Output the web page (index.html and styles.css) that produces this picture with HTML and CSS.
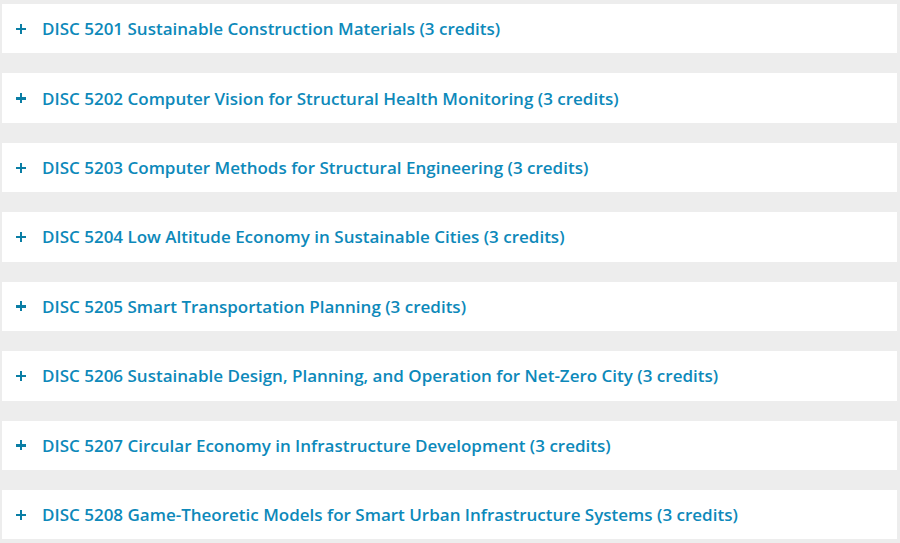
FILE: index.html
```html
<!DOCTYPE html>
<html lang="en">
<head>
<meta charset="utf-8">
<title>Courses</title>
<link rel="stylesheet" href="styles.css">
</head>
<body>
<div class="accordion">
  <div class="item"><span class="plus"></span><span class="title">DISC 5201 Sustainable Construction Materials (3 credits)</span></div>
  <div class="item"><span class="plus"></span><span class="title">DISC 5202 Computer Vision for Structural Health Monitoring (3 credits)</span></div>
  <div class="item"><span class="plus"></span><span class="title">DISC 5203 Computer Methods for Structural Engineering (3 credits)</span></div>
  <div class="item"><span class="plus"></span><span class="title">DISC 5204 Low Altitude Economy in Sustainable Cities (3 credits)</span></div>
  <div class="item"><span class="plus"></span><span class="title">DISC 5205 Smart Transportation Planning (3 credits)</span></div>
  <div class="item"><span class="plus"></span><span class="title">DISC 5206 Sustainable Design, Planning, and Operation for Net-Zero City (3 credits)</span></div>
  <div class="item"><span class="plus"></span><span class="title">DISC 5207 Circular Economy in Infrastructure Development (3 credits)</span></div>
  <div class="item"><span class="plus"></span><span class="title">DISC 5208 Game-Theoretic Models for Smart Urban Infrastructure Systems (3 credits)</span></div>
</div>
</body>
</html>
```
FILE: styles.css
```css
html, body {
  margin: 0;
  padding: 0;
  background: #ededed;
}
body {
  font-family: "Open Sans", "Liberation Sans", sans-serif;
}
.accordion {
  display: flex;
  flex-direction: column;
  gap: 20px;
  padding: 4px 3px 0 2px;
}
.item {
  height: 49.43px;
  background: #ffffff;
  display: flex;
  align-items: center;
  padding-left: 14px;
  box-sizing: border-box;
}
.plus {
  position: relative;
  width: 10px;
  height: 10px;
  flex: none;
  margin-right: 16px;
}
.plus::before,
.plus::after {
  content: "";
  position: absolute;
  background: #0a7ea5;
}
.plus::before {
  left: 0;
  top: 4px;
  width: 10px;
  height: 2.4px;
}
.plus::after {
  left: 3.8px;
  top: 0;
  width: 2.4px;
  height: 10px;
}
.title {
  color: #0d89ba;
  font-size: 17px;
  font-weight: 600;
}
```
